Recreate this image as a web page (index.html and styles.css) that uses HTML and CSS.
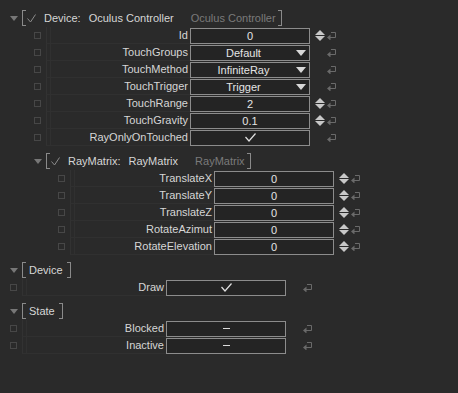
FILE: index.html
```html
<!DOCTYPE html>
<html lang="en">
<head>
    <meta charset="UTF-8">
    <title>Inspector</title>
    <link rel="stylesheet" href="styles.css">
</head>
<body>
    <div class="inspector">
        <section class="group">
            <div class="group-head lvl0">
                <span class="caret"></span>
                <span class="br-open"></span>
                <svg class="head-check" width="9" height="9" viewBox="0 0 9 9"><polyline points="0.5,4.5 3.5,8 8.5,0.5"/></svg>
                <span class="head-label">Device:</span>
                <span class="head-name">Oculus Controller</span>
                <span class="head-type">Oculus Controller</span>
                <span class="br-close"></span>
            </div>
            <div class="row lvl1">
                <span class="pick"></span>
                <span class="label">Id</span>
                <span class="value">0</span>
                <span class="spin"><svg width="10" height="11" viewBox="0 0 10 11"><polygon points="0,5 5,0 10,5"/><polygon points="0,6 10,6 5,11"/></svg></span>
                <span class="reset"><svg width="10" height="9" viewBox="0 0 10 9"><path d="M4 1.5 H8.5 V6.5 H3"/><polygon points="0,6.5 3.5,3.5 3.5,9.5"/></svg></span>
            </div>
            <div class="row lvl1">
                <span class="pick"></span>
                <span class="label">TouchGroups</span>
                <span class="value drop"><span class="text">Default</span><svg width="10" height="6" viewBox="0 0 10 6"><polygon points="0,0 10,0 5,6"/></svg></span>
                <span class="spin"></span>
                <span class="reset"><svg width="10" height="9" viewBox="0 0 10 9"><path d="M4 1.5 H8.5 V6.5 H3"/><polygon points="0,6.5 3.5,3.5 3.5,9.5"/></svg></span>
            </div>
            <div class="row lvl1">
                <span class="pick"></span>
                <span class="label">TouchMethod</span>
                <span class="value drop"><span class="text">InfiniteRay</span><svg width="10" height="6" viewBox="0 0 10 6"><polygon points="0,0 10,0 5,6"/></svg></span>
                <span class="spin"></span>
                <span class="reset"><svg width="10" height="9" viewBox="0 0 10 9"><path d="M4 1.5 H8.5 V6.5 H3"/><polygon points="0,6.5 3.5,3.5 3.5,9.5"/></svg></span>
            </div>
            <div class="row lvl1">
                <span class="pick"></span>
                <span class="label">TouchTrigger</span>
                <span class="value drop"><span class="text">Trigger</span><svg width="10" height="6" viewBox="0 0 10 6"><polygon points="0,0 10,0 5,6"/></svg></span>
                <span class="spin"></span>
                <span class="reset"><svg width="10" height="9" viewBox="0 0 10 9"><path d="M4 1.5 H8.5 V6.5 H3"/><polygon points="0,6.5 3.5,3.5 3.5,9.5"/></svg></span>
            </div>
            <div class="row lvl1">
                <span class="pick"></span>
                <span class="label">TouchRange</span>
                <span class="value">2</span>
                <span class="spin"><svg width="10" height="11" viewBox="0 0 10 11"><polygon points="0,5 5,0 10,5"/><polygon points="0,6 10,6 5,11"/></svg></span>
                <span class="reset"><svg width="10" height="9" viewBox="0 0 10 9"><path d="M4 1.5 H8.5 V6.5 H3"/><polygon points="0,6.5 3.5,3.5 3.5,9.5"/></svg></span>
            </div>
            <div class="row lvl1">
                <span class="pick"></span>
                <span class="label">TouchGravity</span>
                <span class="value">0.1</span>
                <span class="spin"><svg width="10" height="11" viewBox="0 0 10 11"><polygon points="0,5 5,0 10,5"/><polygon points="0,6 10,6 5,11"/></svg></span>
                <span class="reset"><svg width="10" height="9" viewBox="0 0 10 9"><path d="M4 1.5 H8.5 V6.5 H3"/><polygon points="0,6.5 3.5,3.5 3.5,9.5"/></svg></span>
            </div>
            <div class="row lvl1">
                <span class="pick"></span>
                <span class="label">RayOnlyOnTouched</span>
                <span class="value"><svg class="tick" width="11" height="9" viewBox="0 0 11 9"><polyline points="0.5,4 4,8 10.5,0.5"/></svg></span>
                <span class="spin"></span>
                <span class="reset"><svg width="10" height="9" viewBox="0 0 10 9"><path d="M4 1.5 H8.5 V6.5 H3"/><polygon points="0,6.5 3.5,3.5 3.5,9.5"/></svg></span>
            </div>

            <section class="group sub">
                <div class="group-head lvl1">
                    <span class="caret"></span>
                    <span class="br-open"></span>
                    <svg class="head-check" width="9" height="9" viewBox="0 0 9 9"><polyline points="0.5,4.5 3.5,8 8.5,0.5"/></svg>
                    <span class="head-label">RayMatrix:</span>
                    <span class="head-name">RayMatrix</span>
                    <span class="head-type">RayMatrix</span>
                    <span class="br-close"></span>
                </div>
                <div class="row lvl2">
                    <span class="pick"></span>
                    <span class="label">TranslateX</span>
                    <span class="value">0</span>
                    <span class="spin"><svg width="10" height="11" viewBox="0 0 10 11"><polygon points="0,5 5,0 10,5"/><polygon points="0,6 10,6 5,11"/></svg></span>
                    <span class="reset"><svg width="10" height="9" viewBox="0 0 10 9"><path d="M4 1.5 H8.5 V6.5 H3"/><polygon points="0,6.5 3.5,3.5 3.5,9.5"/></svg></span>
                </div>
                <div class="row lvl2">
                    <span class="pick"></span>
                    <span class="label">TranslateY</span>
                    <span class="value">0</span>
                    <span class="spin"><svg width="10" height="11" viewBox="0 0 10 11"><polygon points="0,5 5,0 10,5"/><polygon points="0,6 10,6 5,11"/></svg></span>
                    <span class="reset"><svg width="10" height="9" viewBox="0 0 10 9"><path d="M4 1.5 H8.5 V6.5 H3"/><polygon points="0,6.5 3.5,3.5 3.5,9.5"/></svg></span>
                </div>
                <div class="row lvl2">
                    <span class="pick"></span>
                    <span class="label">TranslateZ</span>
                    <span class="value">0</span>
                    <span class="spin"><svg width="10" height="11" viewBox="0 0 10 11"><polygon points="0,5 5,0 10,5"/><polygon points="0,6 10,6 5,11"/></svg></span>
                    <span class="reset"><svg width="10" height="9" viewBox="0 0 10 9"><path d="M4 1.5 H8.5 V6.5 H3"/><polygon points="0,6.5 3.5,3.5 3.5,9.5"/></svg></span>
                </div>
                <div class="row lvl2">
                    <span class="pick"></span>
                    <span class="label">RotateAzimut</span>
                    <span class="value">0</span>
                    <span class="spin"><svg width="10" height="11" viewBox="0 0 10 11"><polygon points="0,5 5,0 10,5"/><polygon points="0,6 10,6 5,11"/></svg></span>
                    <span class="reset"><svg width="10" height="9" viewBox="0 0 10 9"><path d="M4 1.5 H8.5 V6.5 H3"/><polygon points="0,6.5 3.5,3.5 3.5,9.5"/></svg></span>
                </div>
                <div class="row lvl2">
                    <span class="pick"></span>
                    <span class="label">RotateElevation</span>
                    <span class="value">0</span>
                    <span class="spin"><svg width="10" height="11" viewBox="0 0 10 11"><polygon points="0,5 5,0 10,5"/><polygon points="0,6 10,6 5,11"/></svg></span>
                    <span class="reset"><svg width="10" height="9" viewBox="0 0 10 9"><path d="M4 1.5 H8.5 V6.5 H3"/><polygon points="0,6.5 3.5,3.5 3.5,9.5"/></svg></span>
                </div>
            </section>
        </section>

        <section class="group">
            <div class="group-head lvl0">
                <span class="caret"></span>
                <span class="br-open plain"></span>
                <span class="head-title">Device</span>
                <span class="br-close plain"></span>
            </div>
            <div class="row lvl0">
                <span class="pick"></span>
                <span class="label">Draw</span>
                <span class="value"><svg class="tick" width="11" height="9" viewBox="0 0 11 9"><polyline points="0.5,4 4,8 10.5,0.5"/></svg></span>
                <span class="spin"></span>
                <span class="reset"><svg width="10" height="9" viewBox="0 0 10 9"><path d="M4 1.5 H8.5 V6.5 H3"/><polygon points="0,6.5 3.5,3.5 3.5,9.5"/></svg></span>
            </div>
        </section>

        <section class="group">
            <div class="group-head lvl0">
                <span class="caret"></span>
                <span class="br-open plain"></span>
                <span class="head-title">State</span>
                <span class="br-close plain"></span>
            </div>
            <div class="row lvl0">
                <span class="pick"></span>
                <span class="label">Blocked</span>
                <span class="value"><span class="dash"></span></span>
                <span class="spin"></span>
                <span class="reset"><svg width="10" height="9" viewBox="0 0 10 9"><path d="M4 1.5 H8.5 V6.5 H3"/><polygon points="0,6.5 3.5,3.5 3.5,9.5"/></svg></span>
            </div>
            <div class="row lvl0">
                <span class="pick"></span>
                <span class="label">Inactive</span>
                <span class="value"><span class="dash"></span></span>
                <span class="spin"></span>
                <span class="reset"><svg width="10" height="9" viewBox="0 0 10 9"><path d="M4 1.5 H8.5 V6.5 H3"/><polygon points="0,6.5 3.5,3.5 3.5,9.5"/></svg></span>
            </div>
        </section>
    </div>
</body>
</html>
```

FILE: styles.css
```css
body {
    margin: 0;
    background-color: #2a2a2a;
    color: #d6d6d6;
    font-family: "Liberation Sans", Arial, sans-serif;
    font-size: 11px;
}

.inspector {
    padding-top: 9px;
}

.group + .group,
.group.sub {
    margin-top: 6px;
}

.lvl0 { padding-left: 10px; }
.lvl1 { padding-left: 34px; }
.lvl2 { padding-left: 58px; }

/* group header */
.group-head {
    display: flex;
    align-items: center;
    height: 18px;
}

    .group-head .caret {
        width: 0;
        height: 0;
        border-left: 4px solid transparent;
        border-right: 4px solid transparent;
        border-top: 5px solid #777;
        margin-right: 4px;
    }

    .group-head .br-open,
    .group-head .br-close {
        width: 3px;
        height: 14px;
        border: 1px solid #8a8a8a;
    }

    .group-head .br-open {
        border-right: none;
        margin-right: 1px;
    }

        .group-head .br-open.plain {
            margin-right: 3px;
        }

    .group-head .br-close {
        border-left: none;
        margin-left: 2px;
    }

        .group-head .br-close.plain {
            margin-left: 4px;
        }

.head-check {
    margin-right: 8px;
}

    .head-check polyline {
        fill: none;
        stroke: #8a8a8a;
        stroke-width: 1;
    }

.head-label {
    margin-right: 8px;
}

.head-type {
    margin-left: 17px;
    color: #7a7a7a;
}

/* property rows */
.row {
    display: flex;
    align-items: center;
    height: 17px;
}

    .row .pick {
        width: 7px;
        height: 7px;
        box-sizing: border-box;
        border: 1px solid #474747;
        margin-right: 5px;
    }

    .row .label {
        width: 144px;
        height: 17px;
        box-sizing: border-box;
        padding-right: 2px;
        line-height: 16px;
        text-align: right;
        white-space: nowrap;
        border-left: 1px solid #323232;
        border-bottom: 1px solid #303030;
        box-shadow: inset 3px 0 0 #2a2a2a, inset 4px 0 0 #303030;
    }

    .row .value {
        display: flex;
        align-items: center;
        justify-content: center;
        width: 120px;
        height: 16px;
        box-sizing: border-box;
        border: 1px solid #8c8c8c;
        background-color: #242424;
        color: #e4e4e4;
    }

        .row .value.drop .text {
            flex: 1;
            text-align: center;
        }

        .row .value.drop svg {
            margin-right: 3px;
            fill: #d8d8d8;
        }

    .row .tick polyline {
        fill: none;
        stroke: #e0e0e0;
        stroke-width: 1.2;
    }

    .row .dash {
        width: 7px;
        height: 1px;
        background-color: #dcdcdc;
    }

    .row .spin {
        width: 10px;
        height: 11px;
        margin-left: 5px;
        fill: #c8c8c8;
    }

    .row .reset {
        width: 10px;
        height: 9px;
        margin-left: 2px;
    }

        .row .reset path {
            fill: none;
            stroke: #6a6a6a;
            stroke-width: 1;
        }

        .row .reset polygon {
            fill: #6a6a6a;
        }

    .row svg {
        display: block;
    }
```
